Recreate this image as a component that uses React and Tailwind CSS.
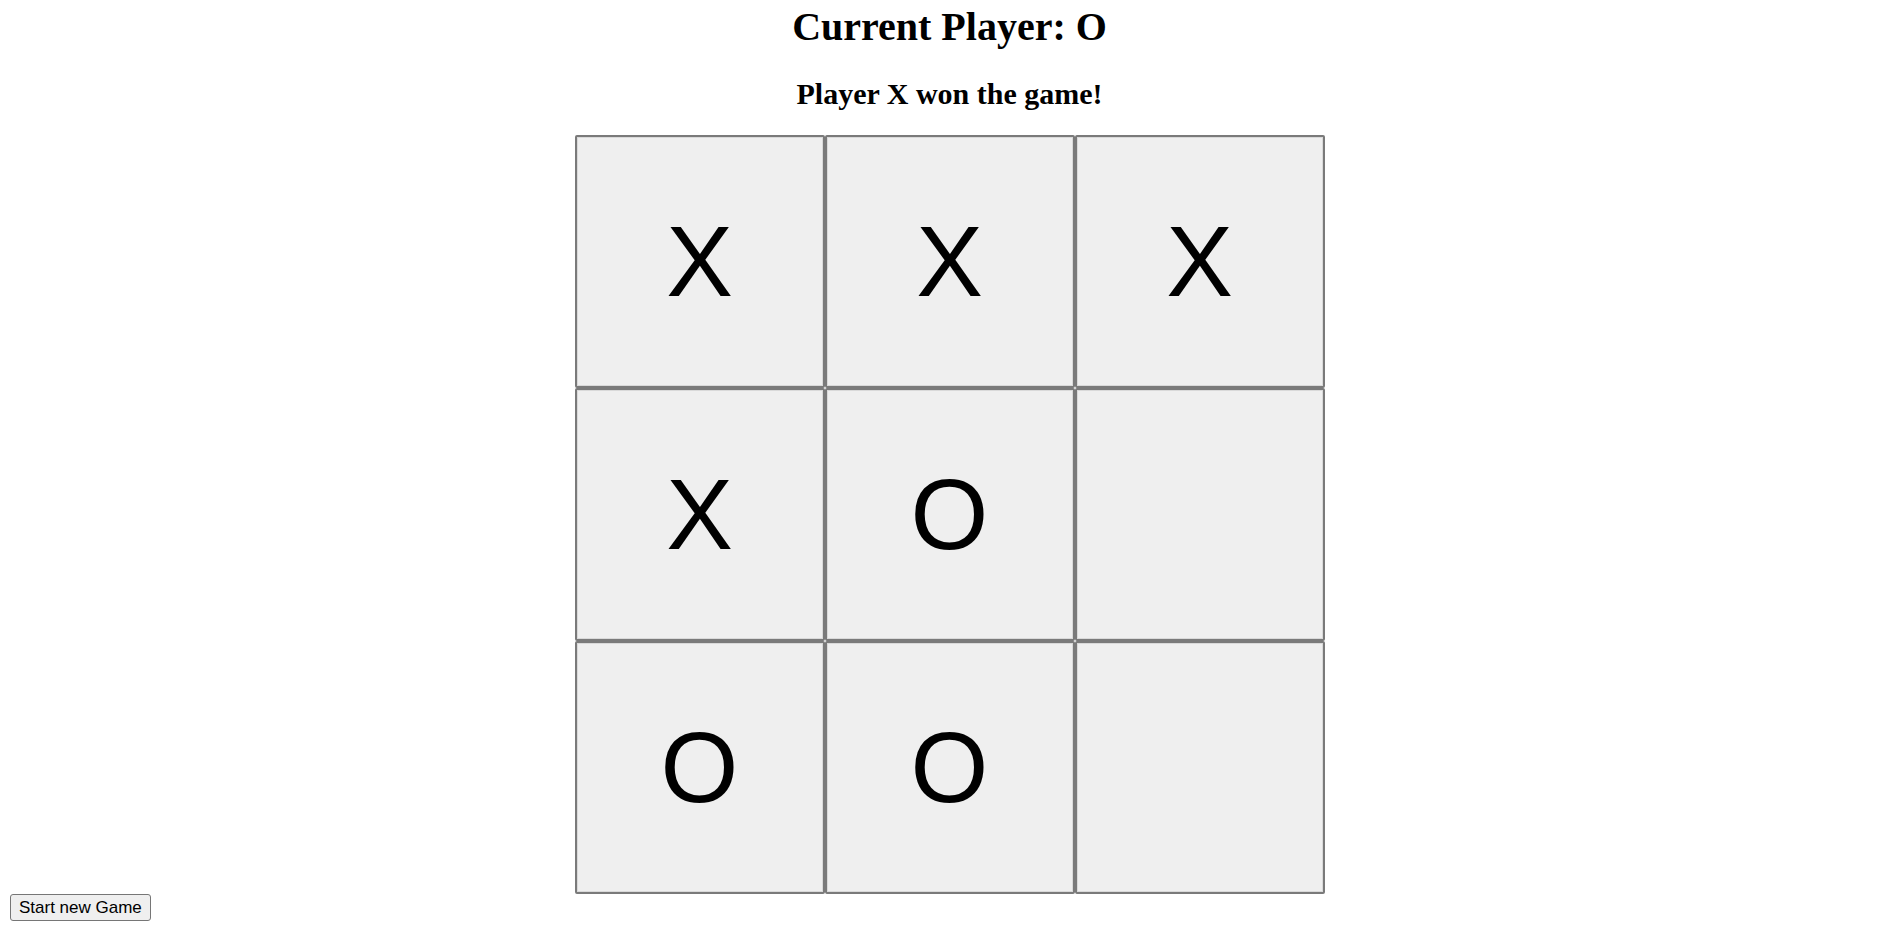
import { useState } from "react";

const START = ["X", "X", "X", "X", "O", "", "O", "O", ""];

const LINES = [
  [0, 1, 2],
  [3, 4, 5],
  [6, 7, 8],
  [0, 3, 6],
  [1, 4, 7],
  [2, 5, 8],
  [0, 4, 8],
  [2, 4, 6],
];

const getWinner = (cells) => {
  for (const [a, b, c] of LINES) {
    if (cells[a] && cells[a] === cells[b] && cells[a] === cells[c]) return cells[a];
  }
  return null;
};

const App = () => {
  const [cells, setCells] = useState(START);
  const [player, setPlayer] = useState("O");

  const winner = getWinner(cells);

  const handleClick = (i) => {
    if (winner || cells[i]) return;
    const next = [...cells];
    next[i] = player;
    setCells(next);
    setPlayer(player === "X" ? "O" : "X");
  };

  const resetGame = () => {
    setCells(Array(9).fill(""));
    setPlayer("X");
  };

  return (
    <div className="min-h-[926px] bg-white text-black font-['Liberation_Serif','Times_New_Roman',serif]">
      <h1 className="mt-[4px] text-center text-[40px] leading-[46px] font-bold">
        Current Player: {player}
      </h1>
      <h2 className="mt-[27px] text-center text-[30px] leading-[34.5px] font-bold">
        {winner ? `Player ${winner} won the game!` : "\u00a0"}
      </h2>

      <div className="mx-auto mt-[23px] grid w-[750px] grid-cols-3">
        {cells.map((cell, i) => (
          <button
            key={i}
            onClick={() => handleClick(i)}
            className="flex h-[253px] w-[250px] items-center justify-center rounded-[2px] border-2 border-[#7a7a7a] bg-[#efefef] font-['Liberation_Sans',Arial,sans-serif] text-[100px] leading-none text-black shadow-[inset_0_0_0_1px_#d9d9d9]"
          >
            {cell}
          </button>
        ))}
      </div>

      <button
        onClick={resetGame}
        className="ml-[10px] h-[27px] rounded-[3px] border border-[#767676] bg-[#efefef] px-[8px] font-['Liberation_Sans',Arial,sans-serif] text-[17px] leading-none text-black"
      >
        Start new Game
      </button>
    </div>
  );
};

export default App;
